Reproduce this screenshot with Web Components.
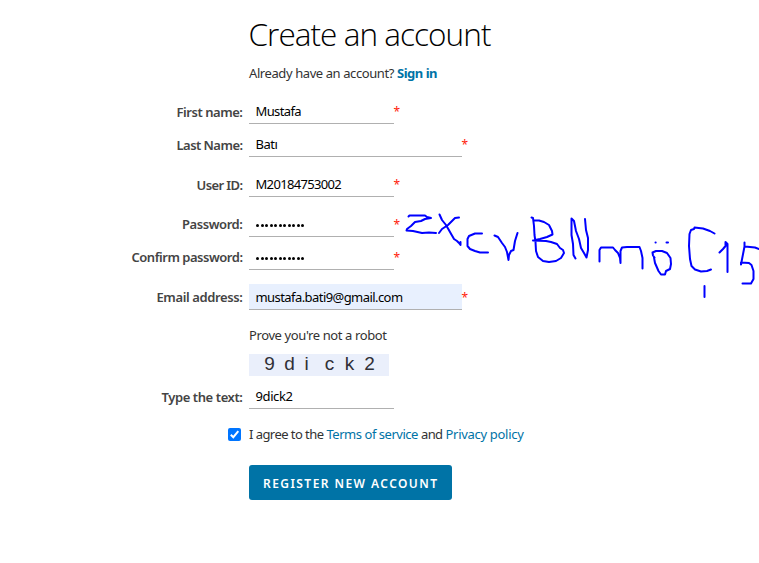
<!DOCTYPE html>
<html lang="en">
<head>
<meta charset="utf-8">
<title>Create an account</title>
<style>
html,body{margin:0;height:563px;overflow:hidden;background:#fff;font-family:"Noto Sans","Open Sans",sans-serif}
</style>
</head>
<body>
<register-page></register-page>
<script>
// Single line of text whose tracking is adjusted to fill a given width.
class FitText extends HTMLElement {
  connectedCallback() {
    const root = this.attachShadow({mode: 'open'});
    root.innerHTML = `<style>:host{display:inline-block;white-space:nowrap;line-height:inherit}span{display:inline-block}</style><span></span>`;
    const s = root.querySelector('span');
    s.textContent = this.getAttribute('text');
    const target = +this.getAttribute('w');
    const n = [...s.textContent].length;
    const natural = s.getBoundingClientRect().width;
    s.style.letterSpacing = ((target - natural) / n) + 'px';
  }
}
customElements.define('fit-text', FitText);

class FormRow extends HTMLElement {
  connectedCallback() {
    const a = n => this.getAttribute(n) || '';
    const root = this.attachShadow({mode: 'open'});
    const dots = '<i></i>'.repeat(11);
    root.innerHTML = `<style>
      :host{display:grid;grid-template-columns:242.5px auto;column-gap:6.5px;height:26px;margin-bottom:7px;font-size:13px;line-height:18px}
      :host([gap]){margin-bottom:14px}
      .label{text-align:right;font-weight:600;color:#444;padding-top:${a('ly') || 5}px}
      .line{display:flex}
      .field{box-sizing:border-box;width:145px;height:26px;border-bottom:1px solid #b0b0b0;padding:4px 0 0 6.5px;color:#000}
      :host([wide]) .field{width:213px}
      :host([filled]) .field{background:#e8f0fe}
      .dots{display:flex;gap:1.55px;padding:9px 0 0 .5px}
      i{width:3px;height:3px;border-radius:50%;background:#000}
      .star{color:#ff1a0a;font-size:12px;padding:5px 0 0 0;margin-left:-.5px}
    </style>
    <div class="label"><fit-text text="${a('label')}" w="${a('lw')}"></fit-text></div>
    <div class="line"><div class="field">${this.hasAttribute('secret') ? `<div class="dots">${dots}</div>` : `<fit-text text="${a('value')}" w="${a('vw')}"></fit-text>`}</div>${this.hasAttribute('required') ? '<span class="star">*</span>' : ''}</div>`;
  }
}
customElements.define('form-row', FormRow);

class CaptchaStrip extends HTMLElement {
  connectedCallback() {
    this.attachShadow({mode: 'open'}).innerHTML = `<style>
      :host{display:flex;box-sizing:border-box;width:140px;height:22px;padding-left:10.5px;background:#eaeffb;color:#303036;font:19px/19px "Liberation Sans",Arial,sans-serif}
      span{width:20px;text-align:center}
      span:nth-of-type(3){width:14px;margin-right:6px}
    </style>` + [...this.getAttribute('code')].map(c => `<span>${c}</span>`).join('');
  }
}
customElements.define('captcha-strip', CaptchaStrip);

class CheckMark extends HTMLElement {
  connectedCallback() {
    this.attachShadow({mode: 'open'}).innerHTML = `<style>:host{display:block;width:13px;height:13px}svg{display:block}</style>
    <svg width="13" height="13"><rect width="13" height="13" rx="2" fill="#0075ff"/><path d="M2.8 6.7 5.3 9.2 10.3 3.2" fill="none" stroke="#fff" stroke-width="2"/></svg>`;
  }
}
customElements.define('check-mark', CheckMark);

class SubmitButton extends HTMLElement {
  connectedCallback() {
    this.attachShadow({mode: 'open'}).innerHTML = `<style>:host{display:block}
      button{display:block;width:203px;height:35px;border:0;border-radius:3px;margin:0;padding:2px 0 0 14px;text-align:left;background:#0073a6;color:#fff;font:600 12px/18px "Noto Sans","Open Sans",sans-serif}
    </style><button><slot></slot></button>`;
  }
}
customElements.define('submit-button', SubmitButton);

// Freehand pen marks laid over the form.
class InkLayer extends HTMLElement {
  connectedCallback() {
    this.attachShadow({mode: 'open'}).innerHTML = `<style>:host{position:absolute;left:0;top:0;pointer-events:none}svg{display:block}</style>
    <svg width="759" height="563" fill="none" stroke="#0000ff" stroke-width="2" stroke-linecap="round" stroke-linejoin="round">
      <path d="M408.500 216.500 409.500 215.500H425L427 217 431 218 425 219 421 221 415 222 411 226 407 229 406.500 230.500 413 231 422 233 429 232.500 436 233"/>
      <path d="M439.500 214.500 442 220 446 225 450 232 454 239 457 241 459 243 460.500 245V242"/>
      <path d="M459 217.500 455 218 448 225 442 229 439 233"/>
      <path d="M482 233.500H475L469 236 467.500 239V246L470 249 475 251 480 252.500 488 252.500"/>
      <path d="M494.500 235.500 498 237 500 240 502 243 505 247 507 252 508.500 260 509 255 511 251 513.500 250 515 241 517.500 233"/>
      <path d="M531.500 217.500 533 218 534 226 534.500 235 535.500 242 536 251 538 257 543 261 549 262 556 261 561 258 564 253 563 250 560 248 557 244 551 242 546 241 533 240.500 540 239 547 237 552.500 234.500 552 231 549 225 544 222 539 220.500H534"/>
      <path d="M575.500 258.500 573.500 255 573 244 571.500 235V218.500L574 221 576 231 579 239 581 248 584 253 586.500 257.500 588 250V238L586 230 585 219"/>
      <path d="M599.500 261.500V250L601 247.500H613L615 250 618 253 620 258 620.500 263V251L622 247.500 627 247H639.500L641 251 642.500 258V268.500"/>
      <path d="M654.500 257.500 653 255.500 652.500 252.500 656 251 662 251 667 253 670.500 258 671 264 670 269 666 271 665 274.500 661 274.500 658.500 271 655 263 654 257.500M655.500 242.500h.2M666.500 242.500h1.500"/>
      <path d="M714.500 233.500 710 231 703 228.500 694.500 227.500 694 229 691 230 689.500 234 689 246 690 259 691.500 266 695 269.500 701 271.500 707 271 711 269.500M704.500 286V297"/>
      <path d="M719.500 252.500 723 249 725.500 246 725.500 242 727.500 244V272"/>
      <path d="M744.500 242.500V246.500L741 264.500 741 262.500 749 263 751.500 265 753.500 271V279L751 283.500H742.500M745 246.500 755 247.500 759 249"/>
    </svg>`;
  }
}
customElements.define('ink-layer', InkLayer);

class RegisterPage extends HTMLElement {
  connectedCallback() {
    this.attachShadow({mode: 'open'}).innerHTML = `<style>
      :host{display:block;color:#323232;font-size:13px;line-height:18px}
      h1{margin:0;padding:11px 0 0 248.5px;height:53px;box-sizing:border-box;color:#000;font-family:"Open Sans",sans-serif;font-weight:300;font-size:31.5px;line-height:46px}
      p{margin:0;padding-left:249px;height:18px;display:flex;gap:3px}
      .have{margin:11px 0 16px}
      .robot{margin:16px 0 10px}
      captcha-strip{margin:0 0 7px 249px}
      .agree{margin:16px 0 0;padding-left:228px;display:flex;height:18px}
      check-mark{margin:3px 8px 0 0}
      .copy{display:flex;gap:3px}
      a{color:#0073a6}
      b{color:#0073a6}
      submit-button{margin:22px 0 0 249px}
    </style>
    <h1><fit-text text="Create an account" w="242"></fit-text></h1>
    <p class="have"><fit-text text="Already have an account?" w="145"></fit-text><b><fit-text text="Sign in" w="40"></fit-text></b></p>
    <form-row label="First name:" lw="66" value="Mustafa" vw="45.500" required></form-row>
    <form-row label="Last Name:" lw="66" value="Batı" vw="22" wide gap required></form-row>
    <form-row label="User ID:" lw="46" value="M20184753002" vw="85.500" gap required></form-row>
    <form-row label="Password:" lw="60.500" ly="4" secret required></form-row>
    <form-row label="Confirm password:" lw="111" ly="4" secret gap required></form-row>
    <form-row label="Email address:" lw="86" ly="4" value="mustafa.bati9@gmail.com" vw="147" wide filled gap required></form-row>
    <p class="robot"><fit-text text="Prove you're not a robot" w="137.500"></fit-text></p>
    <captcha-strip code="9dick2"></captcha-strip>
    <form-row label="Type the text:" lw="81" value="9dick2" vw="37" gap></form-row>
    <div class="agree"><check-mark></check-mark><div class="copy"><fit-text text="I agree to the" w="74.500"></fit-text><a><fit-text text="Terms of service" w="91.500"></fit-text></a><fit-text text="and" w="21.500"></fit-text><a><fit-text text="Privacy policy" w="78"></fit-text></a></div></div>
    <submit-button><fit-text text="REGISTER NEW ACCOUNT" w="175.500"></fit-text></submit-button>
    <ink-layer></ink-layer>`;
  }
}
customElements.define('register-page', RegisterPage);
</script>
</body>
</html>
